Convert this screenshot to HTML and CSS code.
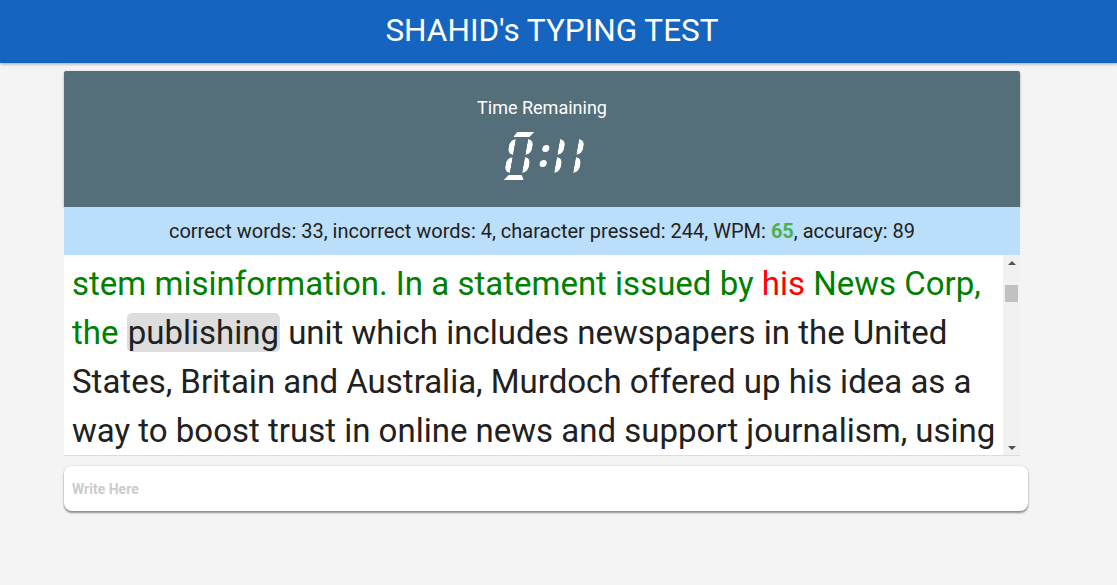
FILE: index.html
```html
<!DOCTYPE html>
<html lang="en">
<head>
<meta charset="utf-8">
<title>SHAHID's TYPING TEST</title>
<link rel="stylesheet" href="styles.css">
</head>
<body>
<header class="app-bar">SHAHID's TYPING TEST</header>
<main class="container">
  <section class="timer">
    <div class="timer-label">Time Remaining</div>
    <div class="clock" role="timer" title="0:11">
      <div class="digit wide" aria-hidden="true">
        <span class="seg a"></span><span class="seg b"></span><span class="seg c"></span>
        <span class="seg d"></span><span class="seg e"></span><span class="seg f"></span>
      </div>
      <div class="colon" aria-hidden="true"><span class="dot"></span><span class="dot"></span></div>
      <div class="digit" aria-hidden="true"><span class="seg b"></span><span class="seg c"></span></div>
      <div class="digit" aria-hidden="true"><span class="seg b"></span><span class="seg c"></span></div>
    </div>
  </section>
  <div class="stats">correct words: 33, incorrect words: 4, character pressed: 244, WPM: <b class="wpm">65</b>, accuracy: 89</div>
  <div class="reader">
    <div class="words" id="words">
      <div class="done">Rupert Murdoch on Monday called on Facebook to pay publishers a carriage fee similar to the fees paid by cable companies to television networks, a move he said would help the social network as it grapples with ways to</div>
      <div id="current-line"><span class="ok">stem</span> <span class="ok">misinformation.</span> <span class="ok">In</span> <span class="ok">a</span> <span class="ok">statement</span> <span class="ok">issued</span> <span class="ok">by</span> <span class="bad">his</span> <span class="ok">News</span> <span class="ok">Corp,</span> <span class="ok">the</span> <span class="cur">publishing</span> unit which includes newspapers in the United States, Britain and Australia, Murdoch offered up his idea as a way to boost trust in online news and support journalism, using the same model that cable companies use to pay networks for the right to carry their programming. Facebook has been under fire for failing to stop the spread of false news stories on its platform, and has said it would rank news sources based on how trustworthy users find them. Murdoch said that if Facebook wants to recognize trusted publishers then it should pay those publishers a carriage fee. The carriage fee would be similar to those paid by cable companies, and publishers would obviously benefit from such a fee, while trusted news would be more widely available to readers. Facebook did not immediately respond to a request for comment.</div>
    </div>
    <div class="scrollbar" aria-hidden="true">
      <div class="sb-btn up"></div>
      <div class="sb-track"><div class="sb-thumb"></div></div>
      <div class="sb-btn down"></div>
    </div>
  </div>
  <input class="entry" type="text" placeholder="Write Here">
</main>
<script src="script.js"></script>
</body>
</html>
```
FILE: styles.css
```css
* { box-sizing: border-box; }
html, body { margin: 0; padding: 0; }
body {
  background: #f4f4f4;
  font-family: Roboto, "Liberation Sans", Arial, sans-serif;
  color: #212121;
  min-height: 585px;
}
.app-bar {
  height: 63px;
  background: #1565c0;
  color: #fff;
  font-size: 31.5px;
  line-height: 62px;
  text-align: center;
  padding-right: 13px;
  box-shadow: 0 1px 3px rgba(0,0,0,0.35);
}
.container {
  width: 956px;
  margin: 8px 0 0 64px;
}
.timer {
  height: 136px;
  background: #546e7a;
  color: #fff;
  padding-top: 25px;
  border-radius: 2px 2px 0 0;
  box-shadow: 0 1px 3px rgba(0,0,0,0.3);
  display: flex;
  flex-direction: column;
  align-items: center;
}
.timer-label {
  font-size: 18px;
  line-height: 24px;
}
.clock {
  margin-top: 12px;
  height: 48px;
  display: flex;
  flex: none;
  margin-left: 4px;
}
.digit {
  position: relative;
  flex: none;
  width: 19px;
  height: 48px;
  transform: skewX(-10deg);
}
.digit.wide { width: 24px; }
.seg {
  position: absolute;
  background: #fff;
}
.seg.a, .seg.d {
  height: 5px;
  width: calc(100% - 4px);
}
.seg.a { top: 0; left: 3px; clip-path: polygon(0 100%, 3px 0, 100% 0, calc(100% - 4px) 100%); }
.seg.d { bottom: 0; left: 1px; clip-path: polygon(4px 0, calc(100% - 3px) 0, 100% 100%, 0 100%); }
.seg.b, .seg.c, .seg.e, .seg.f {
  width: 6px;
  height: 16px;
}
.seg.f { left: 0; top: 7px; border-radius: 6px 0 0 6px / 8px 0 0 8px; clip-path: polygon(0 12%, 100% 0, 100% 100%, 0 88%); }
.seg.e { left: 0; bottom: 7px; border-radius: 6px 0 0 6px / 8px 0 0 8px; clip-path: polygon(0 12%, 100% 0, 100% 100%, 0 88%); }
.seg.b { right: 0; top: 7px; border-radius: 0 6px 6px 0 / 0 8px 8px 0; clip-path: polygon(0 0, 100% 12%, 100% 88%, 0 100%); }
.seg.c { right: 0; bottom: 7px; border-radius: 0 6px 6px 0 / 0 8px 8px 0; clip-path: polygon(0 0, 100% 12%, 100% 88%, 0 100%); }
.colon {
  flex: none;
  width: 8px;
  margin: 0 -4px 0 9px;
  display: flex;
  flex-direction: column;
  justify-content: center;
  align-items: center;
  gap: 8px;
  transform: skewX(-10deg);
}
.dot {
  width: 7px;
  height: 7px;
  border-radius: 50%;
  background: #fff;
}
.stats {
  height: 48px;
  line-height: 48px;
  background: #bbdefb;
  text-align: center;
  font-size: 20px;
  color: #222;
}
.wpm { color: #4caf50; font-weight: bold; }
.reader {
  display: flex;
  height: 201px;
  background: #fff;
  border-bottom: 1px solid #dcdcdc;
}
.words {
  flex: 1;
  min-width: 0;
  overflow: hidden;
  padding: 0 2px 0 8px;
  font-size: 33px;
  line-height: 49px;
  color: #212121;
}
.scrollbar {
  flex: none;
  width: 17px;
  background: #f1f1f1;
  display: flex;
  flex-direction: column;
}
.sb-btn {
  height: 15px;
  display: flex;
  align-items: center;
  justify-content: center;
}
.sb-btn::before {
  content: "";
  border-left: 4px solid transparent;
  border-right: 4px solid transparent;
}
.sb-btn.up::before { border-bottom: 4px solid #505050; }
.sb-btn.down::before { border-top: 4px solid #505050; }
.sb-track {
  flex: 1;
  padding: 15px 2px 0;
}
.sb-thumb {
  height: 17px;
  background: #c1c1c1;
}
.ok { color: #008000; }
.bad { color: #ff0000; }
.cur {
  background: #dddddd;
  border-radius: 5px;
  padding: 0 1px;
}
.entry {
  display: block;
  width: 964px;
  height: 45px;
  margin-top: 10px;
  border: none;
  border-radius: 8px;
  background: #fff;
  padding: 0 8px;
  font-family: Roboto, "Liberation Sans", Arial, sans-serif;
  font-size: 14px;
  font-weight: bold;
  color: #333;
  outline: none;
  box-shadow: 0 2px 2px rgba(0,0,0,0.4), 0 0 3px rgba(0,0,0,0.12);
}
.entry::placeholder { color: #cccccc; }
```
FILE: script.js
```js
var box = document.getElementById('words');
var line = document.getElementById('current-line');
box.scrollTop = line.offsetTop - box.offsetTop - 4;
```
